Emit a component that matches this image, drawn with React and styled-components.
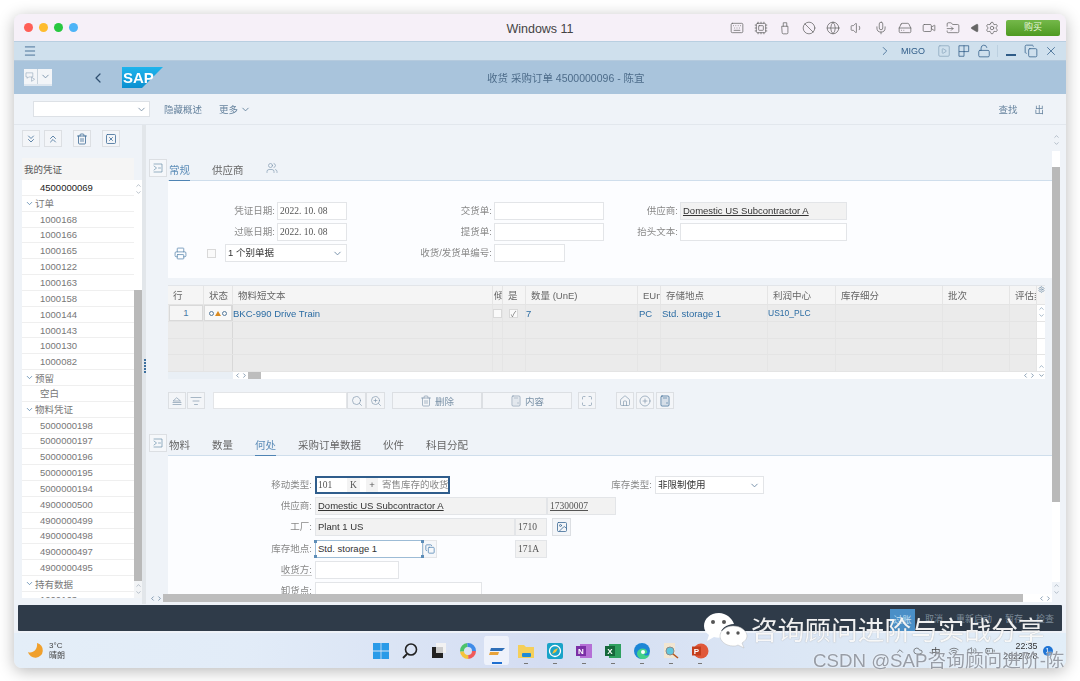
import React from 'react';
import styled, { createGlobalStyle } from 'styled-components';
import {
  Menu, ChevronLeft, ChevronRight, ChevronDown, ChevronUp, ChevronsDown, ChevronsUp, Trash2, SquareX, SquarePlay, X,
  Search, ZoomIn, Printer, Users, Maximize, House, CirclePlus, Calculator, Copy, LockOpen, Keyboard, Cpu,
  Globe, Ban, Volume1, Mic, HardDrive, Video, FolderInput, Settings, Play, Image,
  ListFilter, Wifi, Volume2, BatteryMedium, Cloud,
} from 'lucide-react';

const GlobalStyle = createGlobalStyle`
  html, body { margin: 0; padding: 0; background: #fff; overflow: hidden; }
  body { font-family: "Liberation Sans", "Noto Sans CJK SC", sans-serif; font-size: 9.5px; color: #666; }
  * { box-sizing: border-box; }
`;

const Page = styled.div`
  position: relative;
  width: 1080px;
  height: 681px;
  padding: 14px;
  filter: blur(0.45px);
  overflow: hidden;
`;

const Win = styled.div`
  width: 1052px;
  height: 654px;
  border-radius: 8px;
  overflow: hidden;
  background: #eff3f8;
  box-shadow: 0 3px 16px rgba(0, 0, 0, 0.28);
  display: flex;
  flex-direction: column;
`;

// mac title bar
const TitleBar = styled.div`
  height: 28px;
  flex: none;
  background: #f6f0f8;
  border-bottom: 1px solid #b9cfe1;
  display: flex;
  align-items: center;
  padding: 0 6px 0 10px;
`;

const Lights = styled.div`
  display: flex;
  gap: 6px;
`;

const Light = styled.span`
  width: 9px;
  height: 9px;
  border-radius: 50%;
  background: ${(p) => p.$c};
`;

const WinTitle = styled.div`
  margin-left: 417px;
  padding-top: 2px;
  width: 90px;
  text-align: center;
  font-size: 12.5px;
  color: #444;
`;

const VmIcons = styled.div`
  margin-left: auto;
  display: flex;
  align-items: center;
  gap: 10px;
  color: #666;
  svg { width: 14px; height: 14px; stroke-width: 1.3; flex: none; }
  svg:last-child { margin-left: -5px; }
`;

const BuyBtn = styled.div`
  margin-left: 7px;
  width: 54px;
  height: 16px;
  flex: none;
  border-radius: 2px;
  background: linear-gradient(#74b84a, #4e9a22);
  color: #e8f5dc;
  font-size: 9px;
  text-align: center;
  line-height: 15px;
`;

const ShellBar = styled.div`
  height: 19px;
  flex: none;
  background: #cfe0ed;
  border-bottom: 1px solid #b5cadd;
  display: flex;
  align-items: center;
  color: #2f5c88;
  padding: 0 8px 0 9px;
  svg { width: 14px; height: 14px; stroke-width: 1.4; flex: none; }
`;

const ShellRight = styled.div`
  margin-left: auto;
  display: flex;
  align-items: center;
  gap: 6px;
  font-size: 9px;
  svg { stroke-width: 1.3; }
`;

const ShellName = styled.span`
  margin: 0 6px 0 3px;
`;

const ShellSep = styled.span`
  width: 1px;
  height: 12px;
  background: #bcd0e0;
`;

const MinBar = styled.span`
  width: 10px;
  height: 2px;
  margin: 8px 2px 0;
  background: #2f5c88;
`;

const Header = styled.div`
  height: 33px;
  flex: none;
  background: #a9c4dc;
  display: flex;
  align-items: center;
  padding-left: 10px;
  color: #3f5f7e;
`;

const Chooser = styled.div`
  width: 28px;
  height: 17px;
  background: #f3f5f8;
  border-bottom: 2px solid #dfe7ef;
  display: flex;
  align-items: center;
  color: #7892aa;
  svg { width: 11px; height: 11px; }
  span { width: 13px; height: 100%; display: flex; align-items: center; justify-content: center; }
  span + span { border-left: 1px solid #c9d3dc; width: 15px; }
`;

const BackBtn = styled.div`
  margin-left: 38px;
  width: 32px;
  display: flex;
  color: #2f4f70;
  svg { width: 16px; height: 16px; stroke-width: 1.8; }
`;

const Logo = styled.svg`
  width: 41px;
  height: 21px;
  flex: none;
`;

const HeaderTitle = styled.div`
  margin-left: 324px;
  font-size: 10.5px;
  color: #4d6c8a;
`;

const ToolBar = styled.div`
  height: 31px;
  flex: none;
  background: #eff3f8;
  border-bottom: 1px solid #e2e7ed;
  display: flex;
  align-items: center;
  padding: 0 22px 0 19px;
`;

const ToolSelect = styled.div`
  width: 117px;
  height: 16px;
  background: #fff;
  border: 1px solid #dde1e6;
  display: flex;
  align-items: center;
  justify-content: flex-end;
  color: #7d93a8;
  padding-right: 2px;
  svg { width: 11px; height: 11px; }
`;

const ToolLink = styled.div`
  color: #65829d;
  font-size: 9.5px;
  display: flex;
  align-items: center;
  gap: 2px;
  margin-left: ${(p) => p.$ml || 0}px;
  svg { width: 11px; height: 11px; }
`;

const ToolSpacer = styled.div`
  flex: 1;
`;

const Body = styled.div`
  height: 479px;
  flex: none;
  display: flex;
  background: #eff3f8;
`;

const Sidebar = styled.div`
  width: 128px;
  flex: none;
  padding: 5px 0 0 8px;
  display: flex;
  flex-direction: column;
`;

const SideTools = styled.div`
  display: flex;
  align-items: center;
  height: 17px;
  margin-bottom: 11px;
`;

const SqBtn = styled.div`
  width: ${(p) => p.$w || 18}px;
  height: ${(p) => p.$h || 17}px;
  flex: none;
  margin-left: ${(p) => p.$ml || 0}px;
  background: #f3f5f8;
  border: 1px solid #dcdfe3;
  display: flex;
  align-items: center;
  justify-content: center;
  gap: 3px;
  color: ${(p) => p.$c || '#3b6a96'};
  font-size: 9.5px;
  svg { width: 12px; height: 12px; stroke-width: 1.6; }
`;

const TreeWrap = styled.div`
  flex: 1;
  min-height: 0;
  display: flex;
`;

const Tree = styled.div`
  width: 112px;
  flex: none;
  overflow: hidden;
  height: 440px;
`;

const TreeHead = styled.div`
  height: 22px;
  background: #f5f5f5;
  color: #555;
  padding-left: 2px;
  display: flex;
  align-items: center;
`;

const TreeRow = styled.div`
  height: 15.85px;
  background: #fff;
  border-bottom: 1px solid #efefef;
  display: flex;
  align-items: center;
  padding-left: ${(p) => (p.$group ? 3 : 18)}px;
  color: ${(p) => (p.$dark ? '#222' : '#777')};
  font-size: 9.5px;
  svg { width: 9px; height: 9px; color: #4f7fa8; margin-right: 1px; }
`;

const VBar = styled.div`
  width: 8px;
  flex: none;
  display: flex;
  flex-direction: column;
  height: 440px;
`;

const BarEnd = styled.div`
  background: ${(p) => p.$bg || '#fff'};
  height: ${(p) => p.$h}px;
  flex: none;
  padding-top: ${(p) => p.$pt || 0}px;
  display: flex;
  flex-direction: column;
  align-items: center;
  color: #8b9aa8;
  svg { width: 7px; height: 7px; stroke-width: 2; flex: none; }
`;

const Thumb = styled.div`
  background: #b9b9b9;
  height: ${(p) => p.$h}px;
  flex: none;
`;

const Splitter = styled.div`
  width: 4px;
  flex: none;
  background: #e2e6ea;
  position: relative;
  &::after {
    content: '';
    position: absolute;
    left: 2px;
    top: 234px;
    width: 2px;
    height: 14px;
    background: repeating-linear-gradient(#3d6f9e 0 2px, transparent 2px 3px);
  }
`;

const Main = styled.div`
  width: 906px;
  flex: none;
  display: flex;
  flex-direction: column;
`;

const Content = styled.div`
  height: 469px;
  flex: none;
  overflow: hidden;
  padding: 34px 0 0 3px;
`;

const TabRow = styled.div`
  display: flex;
  height: 22px;
  align-items: flex-start;
`;

const TabToggle = styled(SqBtn)`
  width: 18px;
  height: 18px;
  margin-right: 1px;
  background: #f5f7fa;
  color: #55819f;
  svg { width: 12px; height: 12px; stroke-width: 1.2; }
`;

const Tabs = styled.div`
  flex: 1;
  height: 22px;
  display: flex;
  border-bottom: 1px solid #cfdeec;
  padding-left: 1px;
  gap: 22px;
`;

const Tab = styled.div`
  height: 22px;
  padding: 3px 0 0;
  font-size: 10.5px;
  color: ${(p) => (p.$on ? '#5d8db8' : '#666')};
  border-bottom: ${(p) => (p.$on ? '1px solid #4f84b4' : 'none')};
  svg { width: 12px; height: 12px; color: #7d96ad; stroke-width: 1.3; }
`;

const Panel = styled.div`
  margin-left: 19px;
  width: 884px;
  background: #fcfdff;
`;

const HeadGrid = styled.div`
  display: grid;
  grid-template-columns: 109px 70px 147px 110px 76px 167px;
  grid-auto-rows: 21px;
  height: 97px;
  padding-top: 21px;
  align-items: start;
`;

const FieldLabel = styled.div`
  height: 18px;
  text-align: right;
  padding-right: 2px;
  line-height: 18px;
  color: #888;
  font-size: 9.5px;
`;

const Input = styled.div`
  height: 18px;
  background: ${(p) => (p.$ro ? '#f2f2f2' : '#fff')};
  border: 1px solid #e3e5e8;
  padding-left: 2px;
  line-height: 16px;
  color: #333;
  font-size: ${(p) => p.$fs || 9.5}px;
  width: ${(p) => (p.$w ? `${p.$w}px` : 'auto')};
  flex: none;
  text-decoration: ${(p) => (p.$link ? 'underline' : 'none')};
  white-space: nowrap;
  overflow: hidden;
`;

const MonoInput = styled(Input)`
  font-family: "Liberation Serif", "Noto Sans CJK SC", serif;
  color: #555;
`;

const PrintCell = styled.div`
  height: 18px;
  display: flex;
  align-items: center;
  padding-left: 6px;
  color: #4f7fa8;
  svg { width: 13px; height: 13px; stroke-width: 1.3; }
`;

const Check = styled.span`
  width: 9px;
  height: 9px;
  background: #fafafa;
  border: 1px solid #d9d9d9;
  margin-left: ${(p) => p.$ml || 0}px;
  display: inline-flex;
  align-items: center;
  justify-content: center;
  flex: none;
  font-size: 8px;
  color: #777;
`;

const SelectBox = styled(Input)`
  display: flex;
  align-items: center;
  justify-content: space-between;
  padding-right: 3px;
  margin-left: ${(p) => p.$ml || 0}px;
  svg { width: 11px; height: 11px; color: #6f8ba5; }
`;

const RowThree = styled.div`
  grid-column: 1 / span 2;
  display: flex;
  align-items: center;
`;

const TableWrap = styled.div`
  margin: 7px 0 0 19px;
  width: 877px;
`;

const TableRowEl = styled.div`
  display: grid;
  grid-template-columns: 36px 29px 260px 10px 23px 112px 23px 107px 68px 107px 67px 27px 8px;
  height: ${(p) => p.$h}px;
  background: ${(p) => (p.$head ? '#f5f5f5' : '#ebebeb')};
  border-bottom: 1px solid #e4e4e4;
  border-top: ${(p) => (p.$head ? '1px solid #e2e5e9' : 'none')};
`;

const Cell = styled.div`
  border-right: 1px solid ${(p) => (p.$strong ? '#d8d8d8' : '#e5e5e5')};
  display: flex;
  align-items: center;
  padding-left: ${(p) => p.$pl ?? 5}px;
  overflow: hidden;
  white-space: nowrap;
  color: ${(p) => (p.$head ? '#666' : '#2b6ca3')};
  font-size: ${(p) => p.$fs || 9.5}px;
`;

const NumBox = styled.div`
  width: 34px;
  height: 16px;
  margin-left: 1px;
  background: #f5f5f5;
  border: 1px solid #d9d9d9;
  text-align: center;
  line-height: 14px;
  color: #4a7ca6;
`;

const StatusBox = styled.div`
  width: 28px;
  height: 16px;
  background: #f8f8f8;
  border: 1px solid #d9d9d9;
  display: flex;
  align-items: center;
  justify-content: center;
  gap: 1px;
  i { width: 5px; height: 5px; border: 1px solid #557a9c; border-radius: 50%; }
  b { width: 0; height: 0; border: 3px solid transparent; border-top: 0; border-bottom: 5px solid #d98a20; }
`;

const ScrollCell = styled.div`
  background: ${(p) => p.$bg || '#fff'};
  display: flex;
  flex-direction: column;
  align-items: center;
  padding-top: ${(p) => p.$pt || 0}px;
  color: #6a8aa5;
  svg { width: 7px; height: 7px; stroke-width: 2; flex: none; }
`;

const TableScroll = styled.div`
  height: 7px;
  display: flex;
  align-items: stretch;
  background: #fff;
`;

const ScrollPart = styled.div`
  width: ${(p) => (p.$w ? `${p.$w}px` : 'auto')};
  flex: ${(p) => (p.$w ? 'none' : 1)};
  background: ${(p) => p.$bg || '#fff'};
  display: flex;
  align-items: center;
  justify-content: center;
  color: #4e6f8e;
  svg { width: 7px; height: 7px; stroke-width: 2.2; }
`;

const ActionRow = styled.div`
  margin: 13px 0 25px 19px;
  display: flex;
  align-items: center;
  height: 17px;
`;

const SearchBox = styled.div`
  width: 134px;
  height: 17px;
  background: #fff;
  border: 1px solid #e3e5e8;
  flex: none;
  margin-left: 8px;
`;

const GrayBtn = styled(SqBtn)`
  color: #7c93a8;
  svg { stroke-width: 1.3; }
`;

const LowerForm = styled.div`
  height: 140px;
  padding-top: 20px;
  display: flex;
  flex-direction: column;
  gap: 3.2px;
`;

const FormRow = styled.div`
  display: flex;
  height: 18px;
  align-items: flex-start;
`;

const RowLabel = styled(FieldLabel)`
  width: ${(p) => p.$w || 147}px;
  padding-right: 3px;
  flex: none;
  span { border-bottom: ${(p) => (p.$under ? '1px solid #ccc' : 'none')}; }
`;

const MoveBox = styled.div`
  width: 135px;
  height: 18px;
  flex: none;
  border: 2px solid #2f5d8c;
  background: #fff;
  display: flex;
  align-items: stretch;
  line-height: 14px;
  font-size: 9.5px;
  overflow: hidden;
`;

const MoveSeg = styled.div`
  width: ${(p) => p.$w}px;
  flex: none;
  background: ${(p) => p.$bg || '#fff'};
  padding-left: ${(p) => p.$pl || 0}px;
  text-align: ${(p) => (p.$center ? 'center' : 'left')};
  font-family: ${(p) => (p.$serif ? '"Liberation Serif", serif' : 'inherit')};
  color: ${(p) => p.$c || '#555'};
  white-space: nowrap;
`;

const Focused = styled(Input)`
  position: relative;
  overflow: visible;
  border-color: #9dbcd6;
  &::before {
    content: '';
    position: absolute;
    left: -2px;
    width: calc(100% + 4px);
    height: 18px;
    top: -1px;
    background:
      linear-gradient(#5d8db8, #5d8db8) 0 0 / 3px 3px no-repeat,
      linear-gradient(#5d8db8, #5d8db8) 100% 0 / 3px 3px no-repeat,
      linear-gradient(#5d8db8, #5d8db8) 0 100% / 3px 3px no-repeat,
      linear-gradient(#5d8db8, #5d8db8) 100% 100% / 3px 3px no-repeat;
  }
`;

const CopyBtn = styled.div`
  width: 14px;
  height: 18px;
  flex: none;
  margin-right: 78px;
  display: flex;
  align-items: center;
  justify-content: center;
  color: #5d8db8;
  background: #f5f7fa;
  border: 1px solid #e3e5e8;
  svg { width: 10px; height: 10px; }
`;

const BigHBar = styled.div`
  height: 8px;
  flex: none;
  display: flex;
  background: #fff;
  margin-left: 3px;
`;

const MainScroll = styled.div`
  width: 8px;
  flex: none;
  display: flex;
  flex-direction: column;
`;

const FooterWrap = styled.div`
  height: 29px;
  flex: none;
  padding: 1px 4px 2px;
  background: #eef2f8;
`;

const Footer = styled.div`
  height: 26px;
  background: #2f3b49;
  border-radius: 1px;
  display: flex;
  align-items: center;
  justify-content: flex-end;
  padding-right: 8px;
  gap: 13px;
`;

const FootBtn = styled.div`
  color: #7d8b99;
  font-size: 9px;
  ${(p) => p.$primary && `
    align-self: flex-end;
    background: #4a8fc7;
    color: #c7e0f4;
    width: 25px;
    height: 22px;
    margin-right: -3px;
    line-height: 22px;
    text-align: center;
  `}
`;

const Taskbar = styled.div`
  flex: 1;
  display: flex;
  align-items: center;
  background: linear-gradient(90deg, #e4eef8 0%, #e2ecf8 22%, #d4ddf2 50%, #dce7f5 75%, #e2eef8 100%);
  padding-left: 13px;
`;

const Weather = styled.div`
  width: 339px;
  flex: none;
  display: flex;
  align-items: center;
  gap: 5px;
  font-size: 8px;
  line-height: 10px;
  color: #444;
`;

const TaskIcons = styled.div`
  display: flex;
  align-items: center;
`;

const TaskIcon = styled.div`
  width: 29px;
  height: 29px;
  flex: none;
  display: flex;
  align-items: center;
  justify-content: center;
  position: relative;
  border-radius: 4px;
  border: 0 solid transparent;
  border-width: 0 2px;
  background: ${(p) => (p.$on ? '#eef2fb' : 'transparent')};
  background-clip: padding-box;
  &::after {
    content: '';
    position: absolute;
    bottom: 1px;
    left: 50%;
    width: ${(p) => (p.$on ? 10 : p.$dot ? 4 : 0)}px;
    height: ${(p) => (p.$on ? 2 : 1)}px;
    transform: translateX(-50%);
    background: ${(p) => (p.$on ? '#1f6fd0' : '#777')};
  }
`;

const Tray = styled.div`
  margin-left: 181px;
  display: flex;
  align-items: center;
  gap: 8px;
  color: #444;
  svg { width: 10px; height: 10px; stroke-width: 1.5; flex: none; }
`;

const Clock = styled.div`
  margin-left: 5px;
  width: 38px;
  flex: none;
  font-size: 8.8px;
  line-height: 10px;
  text-align: right;
  color: #333;
`;

const Badge = styled.div`
  width: 10px;
  height: 10px;
  margin-left: 5px;
  border-radius: 50%;
  background: #1f74d4;
  color: #fff;
  font-size: 7px;
  line-height: 10px;
  text-align: center;
`;

// watermarks lie over the window
const Wechat = styled.svg`
  position: absolute;
  left: 703px;
  top: 611px;
  width: 46px;
  height: 38px;
`;

const MarkText = styled.div`
  position: absolute;
  left: 751px;
  top: 614px;
  font-size: 26.7px;
  line-height: 34px;
  color: rgba(255, 255, 255, 0.92);
  text-shadow: 0 0 1px rgba(90, 90, 90, 0.55);
  white-space: nowrap;
`;

const CsdnText = styled.div`
  position: absolute;
  left: 813px;
  top: 650px;
  font-size: 18.7px;
  line-height: 22px;
  color: rgba(130, 135, 145, 0.8);
  text-shadow: 0 0 2px rgba(255, 255, 255, 0.9);
  white-space: nowrap;
`;

const docs = ['1000168', '1000166', '1000165', '1000122', '1000163', '1000158', '1000144', '1000143', '1000130', '1000082'];
const mats = ['5000000198', '5000000197', '5000000196', '5000000195', '5000000194', '4900000500', '4900000499', '4900000498', '4900000497', '4900000495'];
const headers = ['行', '状态', '物料短文本', '倾', '是', '数量 (UnE)', 'EUn', '存储地点', '利润中心', '库存细分', '批次', '评估类'];

const LineIcon = ({ d }) => (
  <svg viewBox="0 0 24 24" fill="none" stroke="currentColor" strokeLinecap="round" strokeLinejoin="round"><path d={d} /></svg>
);

const usbPath = 'M7 9h10v11a2 2 0 0 1-2 2H9a2 2 0 0 1-2-2zM9 9V3h6v6';
const togglePath = 'M4 4h16v16H4M4 8l5 4-5 4M13 12h4';
const layoutPath = 'M4 3h16v10h-8v8H4zM4 13h8M12 3v10';
const ejectPath = 'M12 6l7 6H5zM4 15h16M4 19h16';
const chooserPath = 'M3 4h14v9H8l-3 3v-3H3zM15 14l6 4-6 4z';

const Group = ({ label }) => (
  <TreeRow $group>
    <ChevronDown />
    {label}
  </TreeRow>
);

const TaskSvg = ({ children }) => (
  <svg width="18" height="18" viewBox="0 0 18 18">{children}</svg>
);

const taskIcons = [
  <TaskSvg key="win"><path d="M1 1h7.6v7.6H1zM9.4 1H17v7.6H9.4zM1 9.4h7.6V17H1zM9.4 9.4H17V17H9.4z" fill="#2a9be8" /></TaskSvg>,
  <TaskSvg key="find"><circle cx="10" cy="7.5" r="5.5" fill="none" stroke="#222" strokeWidth="1.6" /><path d="M6 12l-4 4" stroke="#222" strokeWidth="1.8" /></TaskSvg>,
  <TaskSvg key="view"><rect x="6" y="1" width="10" height="10" fill="#f2f2f2" /><rect x="2" y="5" width="11" height="11" fill="#222" /><rect x="6" y="5" width="7" height="6" fill="#ccc" /></TaskSvg>,
  <TaskSvg key="color"><circle cx="9" cy="9" r="6" fill="none" stroke="#f05a5a" strokeWidth="4" strokeDasharray="9 30" /><circle cx="9" cy="9" r="6" fill="none" stroke="#f5c33b" strokeWidth="4" strokeDasharray="9 30" strokeDashoffset="-9" /><circle cx="9" cy="9" r="6" fill="none" stroke="#4cc36b" strokeWidth="4" strokeDasharray="9 30" strokeDashoffset="-18" /><circle cx="9" cy="9" r="6" fill="none" stroke="#3f8be8" strokeWidth="4" strokeDasharray="10 30" strokeDashoffset="-27" /></TaskSvg>,
  <TaskSvg key="app"><path d="M3 6h14l-3 3H2z" fill="#2f6fb8" /><path d="M2 10h9l-1 3H1z" fill="#e8a33a" /></TaskSvg>,
  <TaskSvg key="folder"><path d="M1 3h6l2 2h8v11H1z" fill="#f5cf5a" /><rect x="5" y="11" width="9" height="4" rx="1" fill="#1f8ad6" /></TaskSvg>,
  <TaskSvg key="safari"><rect x="1" y="1" width="16" height="16" rx="2" fill="#19a3c8" /><circle cx="9" cy="9" r="5.5" fill="none" stroke="#fff" strokeWidth="1.3" /><path d="M12 6L8 8l-2 4 4-2z" fill="#f5c33b" /></TaskSvg>,
  <TaskSvg key="note"><rect x="5" y="2" width="12" height="14" fill="#b56fd6" /><rect x="1" y="4" width="10" height="10" fill="#7b2fa6" /><text x="6" y="12" fontSize="8" fontWeight="700" fill="#fff" textAnchor="middle" fontFamily="Liberation Sans">N</text></TaskSvg>,
  <TaskSvg key="xl"><rect x="5" y="2" width="12" height="14" fill="#2fa05f" /><rect x="1" y="4" width="10" height="10" fill="#15683a" /><text x="6" y="12" fontSize="8" fontWeight="700" fill="#fff" textAnchor="middle" fontFamily="Liberation Sans">X</text></TaskSvg>,
  <TaskSvg key="edge"><circle cx="9" cy="9" r="8" fill="#1c86d6" /><path d="M4 11c1-5 8-6 10-2 1 2-1 3-3 3 1 2 4 2 6 0-1 3-4 5-7 5-3 0-6-2-6-6z" fill="#43d18b" /><circle cx="10" cy="10" r="2" fill="#fff" /></TaskSvg>,
  <TaskSvg key="lens"><rect x="2" y="1" width="11" height="15" fill="#f2e6d2" /><circle cx="8" cy="9" r="4" fill="#5fc6de" stroke="#8a8a8a" /><path d="M11 12l5 4" stroke="#b5561f" strokeWidth="1.6" /></TaskSvg>,
  <TaskSvg key="ppt"><circle cx="10" cy="9" r="7.5" fill="#e0583a" /><rect x="1" y="4.5" width="9" height="9" fill="#c43e1c" /><text x="5.5" y="12" fontSize="8" fontWeight="700" fill="#fff" textAnchor="middle" fontFamily="Liberation Sans">P</text></TaskSvg>,
];

const App = () => (
  <Page>
    <GlobalStyle />
    <Win>
      <TitleBar>
        <Lights>
          <Light $c="#ff5f57" />
          <Light $c="#febc2e" />
          <Light $c="#28c840" />
          <Light $c="#4db4f7" />
        </Lights>
        <WinTitle>Windows 11</WinTitle>
        <VmIcons>
          <Keyboard />
          <Cpu />
          <LineIcon d={usbPath} />
          <Ban />
          <Globe />
          <Volume1 />
          <Mic />
          <HardDrive />
          <Video />
          <FolderInput />
          <Play size={10} fill="#666" style={{ width: 10, height: 10, transform: 'rotate(180deg)' }} />
          <Settings />
        </VmIcons>
        <BuyBtn>购买</BuyBtn>
      </TitleBar>

      <ShellBar>
        <Menu />
        <ShellRight>
          <ChevronRight />
          <ShellName>MIGO</ShellName>
          <SquarePlay color="#8ba6bd" />
          <LineIcon d={layoutPath} />
          <LockOpen />
          <ShellSep />
          <MinBar />
          <Copy />
          <X strokeWidth={2.2} />
        </ShellRight>
      </ShellBar>

      <Header>
        <Chooser>
          <span><LineIcon d={chooserPath} /></span>
          <span><ChevronDown /></span>
        </Chooser>
        <BackBtn><ChevronLeft /></BackBtn>
        <Logo viewBox="0 0 41 21">
          <defs>
            <linearGradient id="sapBlue" x1="0" y1="0" x2="0" y2="1">
              <stop offset="0" stopColor="#1fb4ec" />
              <stop offset="1" stopColor="#0a8fd0" />
            </linearGradient>
          </defs>
          <polygon points="0,0 41,0 20,21 0,21" fill="url(#sapBlue)" />
          <text x="1" y="15.5" fontSize="15" fontWeight="700" fill="#fff" fontFamily="Liberation Sans">SAP</text>
        </Logo>
        <HeaderTitle>收货 采购订单 4500000096 - 陈宜</HeaderTitle>
      </Header>

      <ToolBar>
        <ToolSelect><ChevronDown /></ToolSelect>
        <ToolLink $ml={14}>隐藏概述</ToolLink>
        <ToolLink $ml={17}>更多<ChevronDown /></ToolLink>
        <ToolSpacer />
        <ToolLink>查找</ToolLink>
        <ToolLink $ml={17}>出</ToolLink>
      </ToolBar>

      <Body>
        <Sidebar>
          <SideTools>
            <SqBtn><ChevronsDown /></SqBtn>
            <SqBtn $ml={4}><ChevronsUp /></SqBtn>
            <SqBtn $ml={11}><Trash2 /></SqBtn>
            <SqBtn $ml={11}><SquareX /></SqBtn>
          </SideTools>
          <TreeWrap>
            <Tree>
              <TreeHead>我的凭证</TreeHead>
              <TreeRow $dark>4500000069</TreeRow>
              <Group label="订单" />
              {docs.map((d) => <TreeRow key={d}>{d}</TreeRow>)}
              <Group label="预留" />
              <TreeRow>空白</TreeRow>
              <Group label="物料凭证" />
              {mats.map((d) => <TreeRow key={d}>{d}</TreeRow>)}
              <Group label="持有数据" />
              <TreeRow>1000163</TreeRow>
            </Tree>
            <VBar>
              <BarEnd $h={22} $bg="#eff3f8" />
              <BarEnd $h={110} $pt={2}><ChevronUp /><ChevronDown /></BarEnd>
              <Thumb $h={291} />
              <BarEnd $h={17} $bg="#f2f4f6" $pt={1}><ChevronUp /><ChevronDown /></BarEnd>
            </VBar>
          </TreeWrap>
        </Sidebar>
        <Splitter />

        <Main>
          <Content>
            <TabRow>
              <TabToggle><LineIcon d={togglePath} /></TabToggle>
              <Tabs>
                <Tab $on>常规</Tab>
                <Tab>供应商</Tab>
                <Tab><Users /></Tab>
              </Tabs>
            </TabRow>
            <Panel>
              <HeadGrid>
                <FieldLabel>凭证日期:</FieldLabel>
                <MonoInput>2022. 10. 08</MonoInput>
                <FieldLabel>交货单:</FieldLabel>
                <Input />
                <FieldLabel>供应商:</FieldLabel>
                <Input $ro $link>Domestic US Subcontractor A</Input>

                <FieldLabel>过账日期:</FieldLabel>
                <MonoInput>2022. 10. 08</MonoInput>
                <FieldLabel>提货单:</FieldLabel>
                <Input />
                <FieldLabel>抬头文本:</FieldLabel>
                <Input />

                <RowThree>
                  <PrintCell><Printer /></PrintCell>
                  <Check $ml={20} />
                  <SelectBox $w={122} $ml={9}>1 个别单据<ChevronDown /></SelectBox>
                </RowThree>
                <FieldLabel>收货/发货单编号:</FieldLabel>
                <Input $w={71} />
              </HeadGrid>
            </Panel>

            <TableWrap>
              <TableRowEl $head $h={20}>
                {headers.map((h) => <Cell key={h} $head $pl={h === '倾' ? 1 : 5}>{h}</Cell>)}
                <ScrollCell $bg="#f5f5f5"><Settings /></ScrollCell>
              </TableRowEl>
              {[17, 17, 16, 17].map((h, r) => (
                <TableRowEl key={r} $h={h}>
                  <Cell $pl={0}>{r === 0 && <NumBox>1</NumBox>}</Cell>
                  <Cell $pl={0} $strong>{r === 0 && <StatusBox><i /><b /><i /></StatusBox>}</Cell>
                  <Cell $pl={0}>{r === 0 && 'BKC-990 Drive Train'}</Cell>
                  <Cell $pl={0}>{r === 0 && <Check />}</Cell>
                  <Cell $pl={6}>{r === 0 && <Check>✓</Check>}</Cell>
                  <Cell $pl={0}>{r === 0 && '7'}</Cell>
                  <Cell $pl={1}>{r === 0 && 'PC'}</Cell>
                  <Cell $pl={1}>{r === 0 && 'Std. storage 1'}</Cell>
                  <Cell $pl={0} $fs={8.5}>{r === 0 && 'US10_PLC'}</Cell>
                  <Cell />
                  <Cell />
                  <Cell />
                  <ScrollCell $pt={r === 3 ? 8 : 0}>
                    {r === 0 && <ChevronUp />}
                    {r === 0 && <ChevronDown />}
                    {r === 3 && <ChevronUp />}
                  </ScrollCell>
                </TableRowEl>
              ))}
              <TableScroll>
                <ScrollPart $w={65} $bg="#e9eff5" />
                <ScrollPart $w={15}><ChevronLeft /><ChevronRight /></ScrollPart>
                <ScrollPart $w={13} $bg="#bdbdbd" />
                <ScrollPart />
                <ScrollPart $w={16}><ChevronLeft /><ChevronRight /></ScrollPart>
                <ScrollPart $w={8}><ChevronDown /></ScrollPart>
              </TableScroll>
            </TableWrap>

            <ActionRow>
              <GrayBtn><LineIcon d={ejectPath} /></GrayBtn>
              <GrayBtn $ml={1}><ListFilter /></GrayBtn>
              <SearchBox />
              <GrayBtn $w={19} $c="#4f7fa8"><Search /></GrayBtn>
              <GrayBtn $w={19} $c="#4f7fa8"><ZoomIn /></GrayBtn>
              <GrayBtn $w={90} $ml={7} $c="#6f8ba5"><Trash2 />删除</GrayBtn>
              <GrayBtn $w={90} $c="#6f8ba5"><Calculator />内容</GrayBtn>
              <GrayBtn $ml={6}><Maximize /></GrayBtn>
              <GrayBtn $ml={20}><House /></GrayBtn>
              <GrayBtn $ml={2}><CirclePlus /></GrayBtn>
              <SqBtn $ml={2}><Calculator /></SqBtn>
            </ActionRow>

            <TabRow>
              <TabToggle><LineIcon d={togglePath} /></TabToggle>
              <Tabs>
                <Tab>物料</Tab>
                <Tab>数量</Tab>
                <Tab $on>何处</Tab>
                <Tab>采购订单数据</Tab>
                <Tab>伙件</Tab>
                <Tab>科目分配</Tab>
              </Tabs>
            </TabRow>
            <Panel>
              <LowerForm>
                <FormRow>
                  <RowLabel><span>移动类型:</span></RowLabel>
                  <MoveBox>
                    <MoveSeg $w={30} $pl={1} $serif>101</MoveSeg>
                    <MoveSeg $w={13} $center $serif $bg="#f3f3f3">K</MoveSeg>
                    <MoveSeg $w={6} />
                    <MoveSeg $w={12} $center $bg="#f3f3f3">+</MoveSeg>
                    <MoveSeg $w={70} $pl={4} $c="#888">寄售库存的收货</MoveSeg>
                  </MoveBox>
                  <RowLabel $w={205}>库存类型:</RowLabel>
                  <SelectBox $w={109}>非限制使用<ChevronDown /></SelectBox>
                </FormRow>
                <FormRow>
                  <RowLabel>供应商:</RowLabel>
                  <Input $ro $link $w={232}>Domestic US Subcontractor A</Input>
                  <MonoInput $ro $link $w={69}>17300007</MonoInput>
                </FormRow>
                <FormRow>
                  <RowLabel>工厂:</RowLabel>
                  <Input $ro $w={200}>Plant 1 US</Input>
                  <MonoInput $ro $w={32}>1710</MonoInput>
                  <SqBtn $w={19} $h={18} $ml={5}><Image /></SqBtn>
                </FormRow>
                <FormRow>
                  <RowLabel>库存地点:</RowLabel>
                  <Focused $w={108}>Std. storage 1</Focused>
                  <CopyBtn><Copy /></CopyBtn>
                  <MonoInput $ro $w={32}>171A</MonoInput>
                </FormRow>
                <FormRow>
                  <RowLabel $under><span>收货方:</span></RowLabel>
                  <Input $w={84} />
                </FormRow>
                <FormRow>
                  <RowLabel>卸货点:</RowLabel>
                  <Input $w={167} />
                </FormRow>
              </LowerForm>
            </Panel>
          </Content>
          <BigHBar>
            <ScrollPart $w={14} $bg="#eff3f8"><ChevronLeft /><ChevronRight /></ScrollPart>
            <ScrollPart $w={860} $bg="#bdbdbd" />
            <ScrollPart />
            <ScrollPart $w={14}><ChevronLeft /><ChevronRight /></ScrollPart>
          </BigHBar>
        </Main>

        <MainScroll>
          <BarEnd $h={26} $bg="#eff3f8" $pt={8}><ChevronUp /><ChevronDown /></BarEnd>
          <BarEnd $h={16} />
          <Thumb $h={335} />
          <BarEnd $h={80} />
          <BarEnd $h={14} $bg="#eff3f8"><ChevronUp /><ChevronDown /></BarEnd>
        </MainScroll>
      </Body>

      <FooterWrap>
        <Footer>
          <FootBtn $primary>过账</FootBtn>
          <FootBtn>取消</FootBtn>
          <FootBtn>重新启动</FootBtn>
          <FootBtn>暂存</FootBtn>
          <FootBtn>检查</FootBtn>
        </Footer>
      </FooterWrap>

      <Taskbar>
        <Weather>
          <svg width="17" height="17" viewBox="0 0 17 17">
            <path d="M10 1a7.5 7.5 0 1 1-9 9c4 2 10-2 9-9z" fill="#f0a02c" />
          </svg>
          <div>3°C<br />晴朗</div>
        </Weather>
        <TaskIcons>
          {taskIcons.map((icon, i) => (
            <TaskIcon key={i} $on={i === 4} $dot={i > 4}>{icon}</TaskIcon>
          ))}
        </TaskIcons>
        <Tray>
          <ChevronUp />
          <Cloud />
          <span>中</span>
          <Wifi />
          <Volume2 />
          <BatteryMedium />
        </Tray>
        <Clock>22:35<br />2022/7/8</Clock>
        <Badge>1</Badge>
      </Taskbar>
    </Win>

    <Wechat viewBox="0 0 46 38">
      <path d="M16 2C7 2 1 8 1 15c0 4 2 7 5 9l-2 6 7-4c2 .6 4 .8 6 .6C16 18 24 13 31 13 29 7 23 2 16 2z" fill="#fff" />
      <circle cx="10" cy="11" r="2" fill="#555" />
      <circle cx="21" cy="11" r="2" fill="#555" />
      <path d="M30 15c-7 0-13 5-13 10s6 10 13 10c2 0 3 0 5-1l6 3-2-5c3-2 5-4 5-7 0-5-6-10-14-10z" fill="#fff" stroke="#bbb" strokeWidth="0.5" />
      <circle cx="25" cy="22" r="1.7" fill="#555" />
      <circle cx="35" cy="22" r="1.7" fill="#555" />
    </Wechat>
    <MarkText>咨询顾问进阶与实战分享</MarkText>
    <CsdnText>CSDN @SAP咨询顾问进阶-陈</CsdnText>
  </Page>
);

export default App;
